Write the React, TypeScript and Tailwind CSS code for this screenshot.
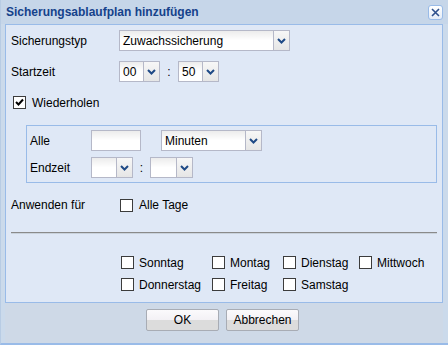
import React from 'react';

const font = { fontFamily: '"Liberation Sans", Arial, sans-serif' };

function Chevron() {
  return (
    <svg width="9" height="6" viewBox="0 0 9 6">
      <polyline points="1,1 4.5,4.5 8,1" fill="none" stroke="#1f4a86" strokeWidth="2" />
    </svg>
  );
}

function Combo({ width, text }: { width: string; text?: string }) {
  return (
    <div className={`flex h-[21px] ${width}`}>
      <div className="flex-1 flex items-center pl-[3px] bg-gradient-to-b from-[#ececec] via-white to-white border border-[#b5b8c8] text-[12px] text-black overflow-hidden whitespace-nowrap">
        {text}
      </div>
      <div className="w-[16px] flex items-center justify-center border border-l-0 border-[#b5b8c8] bg-gradient-to-b from-[#f7f7f7] to-[#e6e6e6]">
        <Chevron />
      </div>
    </div>
  );
}

function Checkbox({ checked }: { checked?: boolean }) {
  return (
    <div className="w-[13px] h-[13px] shrink-0 border border-[#3c3c3c] bg-white flex items-center justify-center">
      {checked && (
        <svg width="9" height="9" viewBox="0 0 9 9">
          <path d="M1 4 L3.5 6.5 L8 1.5" fill="none" stroke="#000" strokeWidth="2" />
        </svg>
      )}
    </div>
  );
}

function Day({ label }: { label: string }) {
  return (
    <div className="flex items-center gap-[5px] h-[13px]">
      <Checkbox />
      <span className="text-[12px] text-black">{label}</span>
    </div>
  );
}

export default function App() {
  return (
    <div style={font} className="w-[448px] h-[345px] flex flex-col bg-[#cbdaeb] border-b-2 border-[#99bbe8] border-l border-l-[#b8cce4]">
      {/* Title bar */}
      <div className="h-[24px] flex items-center justify-between pl-[5px] pr-[5px] bg-[#c6d6e9]">
        <span className="text-[12px] font-bold text-[#15428b]">Sicherungsablaufplan hinzufügen</span>
        <div className="w-[15px] h-[15px] rounded-[3px] border border-[#99bbe8] bg-gradient-to-b from-white to-[#e4ecf7] flex items-center justify-center">
          <svg width="9" height="9" viewBox="0 0 9 9">
            <path d="M1 1 L8 8 M8 1 L1 8" stroke="#2d4f8c" strokeWidth="1.6" />
          </svg>
        </div>
      </div>

      {/* Body */}
      <div className="pl-[4px] pr-[5px]">
        <div className="h-[279px] border border-[#99bbe8] bg-[#dfe8f6] pl-[5px] pr-[5px] pt-[5px] flex flex-col text-[12px] text-black">
          <div className="flex items-center h-[21px]">
            <span className="w-[108px]">Sicherungstyp</span>
            <Combo width="w-[171px]" text="Zuwachssicherung" />
          </div>

          <div className="flex items-center h-[21px] mt-[10px]">
            <span className="w-[108px]">Startzeit</span>
            <Combo width="w-[41px]" text="00" />
            <span className="w-[18px] text-center">:</span>
            <Combo width="w-[41px]" text="50" />
          </div>

          <div className="flex items-center gap-[6px] h-[13px] mt-[14px] pl-[2px]">
            <Checkbox checked />
            <span>Wiederholen</span>
          </div>

          <div className="ml-[15px] mt-[16px] h-[58px] border border-[#99bbe8] pl-[3px] pt-[4px] flex flex-col gap-[6px]">
            <div className="flex items-center h-[21px]">
              <span className="w-[61px]">Alle</span>
              <div className="w-[50px] h-[21px] bg-gradient-to-b from-[#ececec] via-white to-white border border-[#b5b8c8]" />
              <div className="w-[20px]" />
              <Combo width="w-[101px]" text="Minuten" />
            </div>
            <div className="flex items-center h-[21px]">
              <span className="w-[61px]">Endzeit</span>
              <Combo width="w-[42px]" />
              <span className="w-[17px] text-center">:</span>
              <Combo width="w-[43px]" />
            </div>
          </div>

          <div className="flex items-center h-[14px] mt-[15px]">
            <span className="w-[109px]">Anwenden für</span>
            <div className="flex items-center gap-[6px]">
              <Checkbox />
              <span>Alle Tage</span>
            </div>
          </div>

          <div className="mt-[20px] h-[2px] border-t border-[#8a8a8a] border-b border-b-[#c9d2dc]" />

          <div className="ml-[110px] mt-[22px] grid grid-cols-[91px_71px_76px_auto] gap-y-[9px]">
            <Day label="Sonntag" />
            <Day label="Montag" />
            <Day label="Dienstag" />
            <Day label="Mittwoch" />
            <Day label="Donnerstag" />
            <Day label="Freitag" />
            <Day label="Samstag" />
          </div>
        </div>
      </div>

      {/* Footer */}
      <div className="flex-1 bg-[#ced9e7] ml-[4px] mr-[5px] flex justify-center gap-[7px] pt-[6px] pr-[3px]">
        {['OK', 'Abbrechen'].map((b) => (
          <div
            key={b}
            className="w-[73px] h-[22px] rounded-[2px] border border-[#a8acb4] bg-[linear-gradient(to_bottom,#fbfafc_0%,#f3f1f5_50%,#dcdcdc_51%,#dcdcdc_100%)] flex items-center justify-center text-[12px] text-black"
          >
            {b}
          </div>
        ))}
      </div>
    </div>
  );
}
